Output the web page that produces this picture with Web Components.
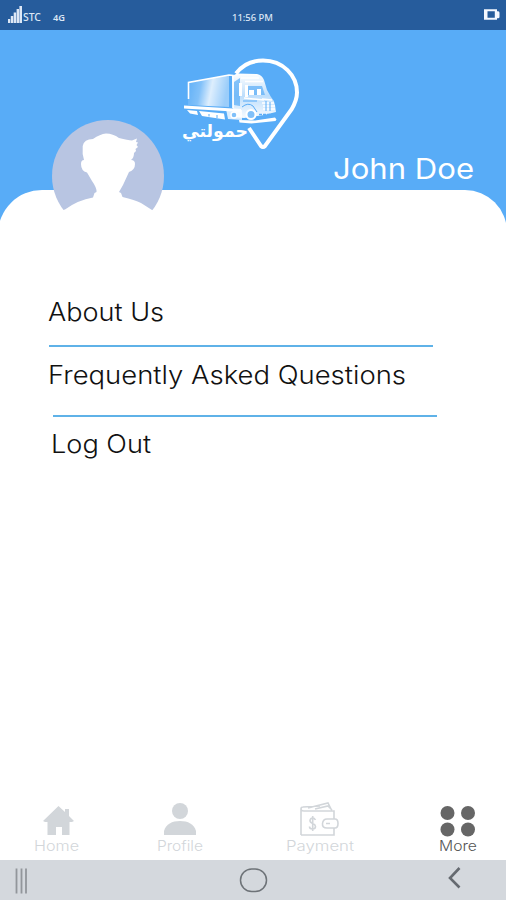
<!DOCTYPE html>
<html lang="en">
<head>
<meta charset="utf-8">
<title>Menu</title>
<style>
html,body{margin:0;height:100%}
body{font-family:Inter,"Noto Sans",sans-serif;background:#fff;overflow:hidden}
</style>
</head>
<body>
<more-screen></more-screen>
<script>
const define = (name, html, setup) => customElements.define(name, class extends HTMLElement {
  connectedCallback() {
    if (this.shadowRoot) return;
    this.attachShadow({ mode: 'open' }).innerHTML = html;
    if (setup) setup.call(this, this.shadowRoot);
  }
});

/* A line of text fitted to a given width: w, h, base (baseline), size, weight */
define('fit-text', `<style>:host{display:block;flex:none}svg{display:block;overflow:visible}text{fill:currentColor}</style><svg><text x="0" lengthAdjust="spacingAndGlyphs"></text></svg>`, function (root) {
  const a = n => this.getAttribute(n), svg = root.querySelector('svg'), t = root.querySelector('text');
  svg.setAttribute('width', a('w'));
  svg.setAttribute('height', a('h'));
  t.setAttribute('y', a('base'));
  t.setAttribute('textLength', a('w'));
  t.setAttribute('font-size', a('size'));
  t.setAttribute('font-weight', a('weight') || 400);
  t.textContent = a('text');
});

define('status-bar', `<style>
:host{display:flex;flex:none;box-sizing:border-box;height:30px;background:#265c9c;color:#dce7f5;padding:0 6px 0 8px;align-items:center;justify-content:space-between;font-family:"Noto Sans",sans-serif}
.l{display:flex;align-items:center;width:223px}.r{width:227px;display:flex;justify-content:flex-end}
svg{display:block}
</style>
<div class="l"><svg width="15" height="30" fill="#dce7f5"><path d="M0 19h2.200v4H0zM2.800 16h2.400v7H2.800zM5.700 12.500h2.400V23H5.700zM8.600 9H11v14H8.600zM11.400 6H14v17h-2.600z"/></svg>
<fit-text text="STC" w="18" h="30" base="20.500" size="10" weight="500"></fit-text>
<fit-text text="4G" w="12" h="30" base="20.500" size="9.500" weight="600" style="margin-left:12px"></fit-text></div>
<fit-text text="11:56 PM" w="41" h="30" base="21" size="9.500" weight="500"></fit-text>
<div class="r"><svg width="17" height="30"><path fill-rule="evenodd" d="M1 9.200h13v2h1.200q1.300 0 1.300 1.500v4q0 1.500-1.300 1.500H14v1.500H1zM4.500 11.300v6.400h7.300v-6.400z" fill="#f4f8ff"/></svg></div>`);

define('brand-logo', `<style>:host{display:block;width:130px;height:100px}svg{display:block;overflow:visible}</style>
<svg width="130" height="100" viewBox="0 0 130 100">
<defs>
<linearGradient id="a" x2="1" y2=".15"><stop offset="0" stop-color="#fff" stop-opacity=".04"/><stop offset=".35" stop-color="#fff" stop-opacity=".25"/><stop offset=".62" stop-color="#fff" stop-opacity=".8"/><stop offset="1" stop-color="#fff" stop-opacity=".4"/></linearGradient>
<linearGradient id="b" x2="0" y2="1"><stop offset="0" stop-color="#fff"/><stop offset=".5" stop-color="#fff" stop-opacity=".6"/><stop offset="1" stop-color="#fff" stop-opacity=".95"/></linearGradient>
</defs>
<path d="M53 19.500C59 11.500 69 6.500 80 6.500c20 0 34 15 34 32 0 6-2 11-5.500 17L82 92q-2 2-4 0L66 74" fill="none" stroke="#fff" stroke-width="4"/>
<path d="M5 28.500 46 21v32L5 51z" fill="url(#a)"/>
<path d="M5.500 45V28.500L46 21l4 .5V54" fill="none" stroke="#fff" stroke-width="1.600"/>
<path d="M1 51.500 58 55v3L1 54.500zM4 56l10 1 1 4-8-1.500zM16 57l25 2.500 1 6L19 62z" fill="#fff"/>
<path d="M26 60v2.500M34 61v3" stroke="#58acf7" stroke-width="1"/>
<path d="M49 22l5-2.500 20 .5q5 1 7 6l3 10 4 7q3 3 4 8l1 7-12 3-20 3-11-1z" fill="url(#b)"/>
<path d="M64 32l15 0 3 9H65zM51 28l6-4v28l-6-1z" fill="#58acf7" opacity=".7"/>
<path d="M56 29h3v13h-3zM62 31h3v12h-3zM66 36h5v5h-5zM74 35h4v6h-4z" fill="#fff"/>
<path d="M58 24h18M62 27.500h18M61 44l20 2M79 45l10 1M79 49h12M80 52h12M80 55h12" stroke="#fff" stroke-width="1.500"/>
<path d="M83 47v10M87 48v9M59 53q6-5 11-1l4 6M60 47h14" fill="none" stroke="#58acf7" stroke-width="1"/>
<path d="M43 55l16 1v10l-14-1z" fill="#fff" opacity=".8"/>
<path d="M56 66l16 .500 20-3 1.500 2-1 1.500-24 2.500-12-1z" fill="#fff"/>
<circle cx="68" cy="60.500" r="4.500" fill="#80c0f9" stroke="#fff" stroke-width="2"/><circle cx="51" cy="61" r="3" fill="#80c0f9" stroke="#fff" stroke-width="1.400"/>
<path d="M76 60.500h15" stroke="#58acf7" stroke-width="1.500" stroke-dasharray="3 1"/>
<text x="65" y="83" direction="rtl" font-family="'DejaVu Sans',sans-serif" font-weight="700" font-size="17" textLength="66" lengthAdjust="spacingAndGlyphs" fill="#fff">حمولتي</text>
</svg>`);

define('user-avatar', `<style>:host{display:block;width:112px;height:112px}svg{display:block}</style>
<svg width="112" height="112"><circle cx="56" cy="56" r="56" fill="#b8c5e2"/>
<path d="M0 112V93l13-3.500Q26 80 41 77.500L42.500 73l2-1Q45 68 40 61L35 52.500Q29 51 29 44q0-4 3-4Q30 34 30.700 26 32 19 41 19q7-5 13-5.500 7 0 13 4.500 9 2 13 2.500l5-2-1 3.500 2 .5-1.500 2.500 1.500 2-2.500 2 .5 2-2 2q0 5-3 7 4 0 4 4 0 6-6 8L71 65l-4 7 2 1 1.500 4Q83 80 89 83l11 7 12 3v19z" fill="#fff"/></svg>`);

define('profile-header', `<style>
:host{display:block;flex:none;height:160px;background:#58acf7;position:relative;padding-bottom:45px}
brand-logo{position:absolute;left:183px;top:24px}
user-avatar{position:absolute;left:52px;top:90px;z-index:2}
.name{display:flex;justify-content:flex-end;padding:120px 32px 0 0;color:#fff}
</style><brand-logo></brand-logo><user-avatar></user-avatar><div class="name"><fit-text text="John Doe" w="141" h="38" base="29" size="28.500" weight="400"></fit-text></div>`);

define('menu-item', `<style>
:host{display:block;box-sizing:border-box}
:host([lined]) div{border-bottom:2px solid #5fb2e8}
div{width:384px;box-sizing:border-box;height:var(--h);color:#111;margin-left:var(--x)}
</style><div><slot></slot></div>`);

define('menu-sheet', `<style>
:host{display:block;flex:1;box-sizing:border-box;background:#fff;border-radius:44px 42px 0 0;margin:-45px -1px 0 -2px;padding:99.5px 0 0 2px;position:relative;z-index:1}
</style><slot></slot>`);

define('tab-item', `<style>
:host{display:flex;flex-direction:column;align-items:center;color:#d2d6da;width:80px}
:host([active]){color:#555}
::slotted(svg){display:block;flex:none}
</style><slot></slot>`);

define('tab-bar', `<style>
:host{display:flex;flex:none;box-sizing:border-box;height:60px;padding-left:16px}
</style><slot></slot>`);

define('system-nav', `<style>
:host{display:flex;flex:none;box-sizing:border-box;height:40px;background:#d4d8dd;justify-content:space-between;padding:0 44px 0 15px}
svg{display:block}
</style>
<svg width="14" height="40"><path d="M1.500 8.500v25M6.500 8.500v25M11 8.500v25" stroke="#92969b" stroke-width="1.800"/></svg>
<svg width="30" height="40" style="margin-left:30px"><rect x="2.500" y="9" width="26" height="22.500" rx="11.200" fill="none" stroke="#6e7378" stroke-width="1.500"/></svg>
<svg width="15" height="40"><path d="M12.500 8 3 18l9.500 9.500" fill="none" stroke="#656a70" stroke-width="2.600"/></svg>`);

define('more-screen', `<style>
:host{display:flex;flex-direction:column;width:506px;height:900px;overflow:hidden}
</style>
<status-bar></status-bar>
<profile-header></profile-header>
<menu-sheet>
<menu-item lined style="--h:57px;--x:49px"><fit-text style="margin-left:-1px" text="About Us" w="116" h="40" base="30.500" size="25" weight="350"></fit-text></menu-item>
<menu-item lined style="--h:70px;--x:53px"><fit-text style="margin-left:-5px" text="Frequently Asked Questions" w="358" h="50" base="37" size="25" weight="350"></fit-text></menu-item>
<menu-item style="--h:60px;--x:51px"><fit-text text="Log Out" w="100" h="50" base="36" size="25" weight="350"></fit-text></menu-item>
</menu-sheet>
<tab-bar>
<tab-item><svg width="40" height="38" fill="#d2d6da" style="margin-left:4px"><path d="M5 21 20.500 6l6.500 6V9h4v7l5 5-2 1h-2.500v13H24v-8h-6v8H9.500V22H7z"/></svg><fit-text text="Home" w="45" h="20" base="12.500" size="14" weight="300"></fit-text></tab-item>
<tab-item style="margin-left:44px"><svg width="40" height="38" fill="#d2d6da"><circle cx="20" cy="11" r="8"/><path d="M4 35v-4c2-7 8-10 16-10s14 3 16 10v4z"/></svg><fit-text text="Profile" w="46" h="20" base="12.500" size="14" weight="300"></fit-text></tab-item>
<tab-item style="margin-left:60px"><svg width="44" height="38" fill="none" stroke="#d2d6da" stroke-width="1.600"><path d="M3 35V9q0-2 2-2l17-1M3 9q0 2 3 2h30v8M36 28v7H3M10 8l20-5 3 6M17 9l13-3 4 4M37 19h-8q-4 0-4.500 4.500T29 28h8q3 0 3-4.500T37 19zM28 23.500h4"/><path d="M17.500 20q-1-2-3-2T12 20.500q0 2 2.700 3t2.800 3q0 2.500-3 2.500t-3-2.500M14.700 16v15"/></svg><fit-text text="Payment" w="68" h="20" base="12.500" size="14" weight="300"></fit-text></tab-item>
<tab-item active style="margin-left:58px"><svg width="40" height="38" fill="#666"><circle cx="9.500" cy="13" r="7"/><circle cx="30" cy="13" r="7"/><circle cx="9.500" cy="29.500" r="7"/><circle cx="30" cy="29.500" r="7"/></svg><fit-text text="More" w="38" h="20" base="12.500" size="14" weight="350"></fit-text></tab-item>
</tab-bar>
<system-nav></system-nav>`);
</script>
</body>
</html>
